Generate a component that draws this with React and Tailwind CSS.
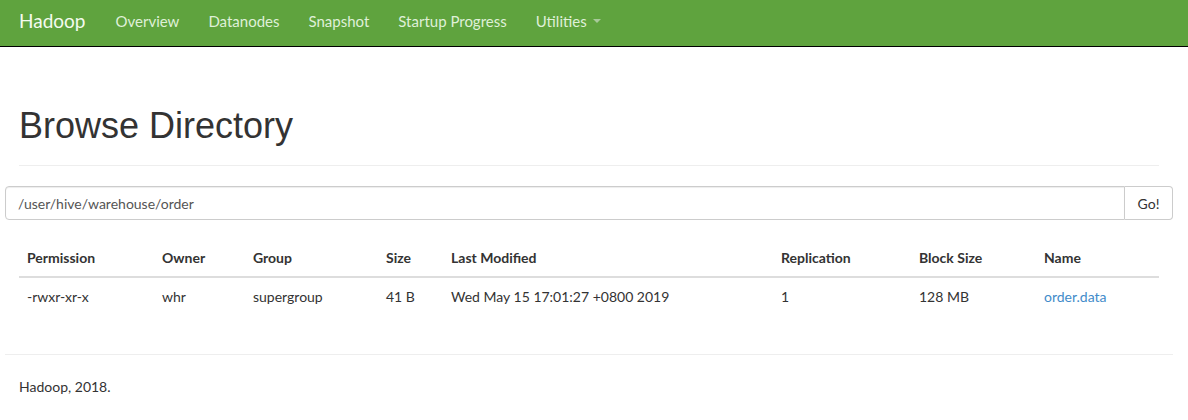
import React from "react";

const columns = [
  { label: "Permission", w: "w-[135px]" },
  { label: "Owner", w: "w-[91px]" },
  { label: "Group", w: "w-[133px]" },
  { label: "Size", w: "w-[65px]" },
  { label: "Last Modified", w: "w-[330px]" },
  { label: "Replication", w: "w-[138px]" },
  { label: "Block Size", w: "w-[125px]" },
  { label: "Name", w: "" },
];

const row = [
  "-rwxr-xr-x",
  "whr",
  "supergroup",
  "41 B",
  "Wed May 15 17:01:27 +0800 2019",
  "1",
  "128 MB",
];

const App = () => {
  return (
    <div className="min-h-[420px] bg-white font-['Lato','Liberation_Sans',sans-serif] text-[14px] text-[#333]">
      {/* Navbar */}
      <nav className="h-[47px] bg-[#5fa33e] border-b border-black flex items-center pb-[4px]">
        <a className="ml-[19px] text-[19px] text-[#f4fbef]">Hadoop</a>
        <div className="flex items-center ml-[30px] gap-[29px] text-[15px] text-[#dff0d8]">
          <a>Overview</a>
          <a>Datanodes</a>
          <a>Snapshot</a>
          <a>Startup Progress</a>
          <a className="flex items-center">
            Utilities
            <span className="ml-[6px] w-0 h-0 border-x-[4px] border-x-transparent border-t-[4px] border-t-[#a8c99a]"></span>
          </a>
        </div>
      </nav>

      {/* Page */}
      <div className="pl-[5px] pr-[15px]">
        <div className="mx-[14px] pt-[59px] pb-[19px] border-b border-[#eee]">
          <h1 className="font-['Liberation_Sans',sans-serif] text-[36px] leading-[40px] text-[#333]">
            Browse Directory
          </h1>
        </div>

        <div className="mt-[20px] flex h-[34px]">
          <input
            readOnly
            value="/user/hive/warehouse/order"
            className="flex-1 border border-[#ccc] rounded-l-[4px] px-[12px] text-[14px] text-[#555] outline-none shadow-[inset_0_1px_1px_rgba(0,0,0,0.075)]"
          />
          <button className="w-[48px] border border-l-0 border-[#ccc] rounded-r-[4px] bg-white text-[14px] text-[#333]">
            Go!
          </button>
        </div>

        <div className="mx-[14px] mt-[20px]">
          <table className="w-full border-collapse table-fixed">
            <thead>
              <tr className="border-b-2 border-[#ddd]">
                {columns.map((c) => (
                  <th key={c.label} className={`${c.w} text-left font-bold px-[8px] py-[8px] leading-[20px]`}>
                    {c.label}
                  </th>
                ))}
              </tr>
            </thead>
            <tbody>
              <tr>
                {row.map((cell, i) => (
                  <td key={i} className="px-[8px] pt-[9px] pb-[8px] leading-[20px]">
                    {cell}
                  </td>
                ))}
                <td className="px-[8px] pt-[9px] pb-[8px] leading-[20px]">
                  <a className="text-[#428bca]">order.data</a>
                </td>
              </tr>
            </tbody>
          </table>
        </div>

        <div className="mt-[39px] border-t border-[#eee] pt-[22px] pb-[20px]">
          <p className="ml-[14px] leading-[20px]">Hadoop, 2018.</p>
        </div>
      </div>
    </div>
  );
};

export default App;
